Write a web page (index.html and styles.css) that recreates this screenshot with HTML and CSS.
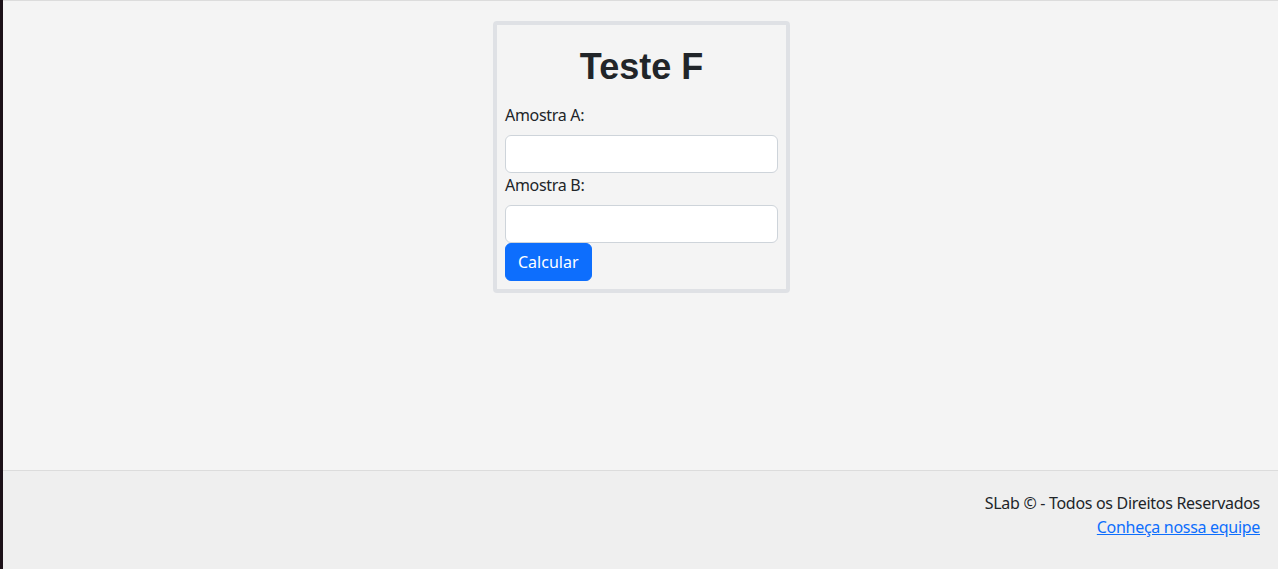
FILE: index.html
```html
<!DOCTYPE html>
<html lang="pt-BR">
<head>
<meta charset="utf-8">
<title>Teste F</title>
<link rel="stylesheet" href="styles.css">
</head>
<body>
<div class="page">
  <main class="main">
    <form class="card">
      <h1 class="title">Teste F</h1>
      <label class="label" for="a">Amostra A:</label>
      <input class="field" id="a" type="text">
      <label class="label" for="b">Amostra B:</label>
      <input class="field" id="b" type="text">
      <div class="actions"><button class="btn" type="button">Calcular</button></div>
    </form>
  </main>
  <footer class="footer">
    <div>SLab © - Todos os Direitos Reservados</div>
    <a class="link" href="#">Conheça nossa equipe</a>
  </footer>
</div>
</body>
</html>
```
FILE: styles.css
```css
* { box-sizing: border-box; }
html, body { margin: 0; height: 100%; }
body {
  font-family: "Noto Sans", "Liberation Sans", sans-serif;
  font-size: 16px;
  line-height: 24px;
  letter-spacing: -0.3px;
  color: #212529;
  background: #f4f4f4;
  border-left: 3px solid #1c1118;
}
.page {
  display: flex;
  flex-direction: column;
  height: 100%;
}
.main {
  flex: 1;
  border-top: 1px solid #dcdcdc;
  display: flex;
  justify-content: center;
  align-items: flex-start;
  padding: 20px 0 0 2px;
}
.card {
  width: 297px;
  border: 4px solid #dfe1e5;
  border-radius: 4px;
  padding: 8px;
  display: flex;
  flex-direction: column;
}
.title {
  font-family: "Liberation Sans", Arial, sans-serif;
  font-weight: 700;
  font-size: 36px;
  letter-spacing: 0;
  line-height: 43px;
  margin: 12px 0 15px;
  text-align: center;
  color: #212529;
}
.label {
  display: block;
  margin-bottom: 8px;
}
.field {
  display: block;
  width: 100%;
  height: 38px;
  border: 1px solid #ced4da;
  border-radius: 6px;
  background: #fff;
  font: inherit;
  padding: 6px 12px;
}
.actions { display: flex; }
.btn {
  font: inherit;
  color: #fff;
  background: #0d6efd;
  border: 1px solid #0d6efd;
  border-radius: 6px;
  padding: 6px 12px;
  height: 38px;
}
.footer {
  height: 99px;
  border-top: 1px solid #dcdcdc;
  background: #efefef;
  padding: 20px 18px 0 0;
  text-align: right;
  display: flex;
  flex-direction: column;
  align-items: flex-end;
}
.link {
  color: #0d6efd;
  text-decoration: underline;
}
```
